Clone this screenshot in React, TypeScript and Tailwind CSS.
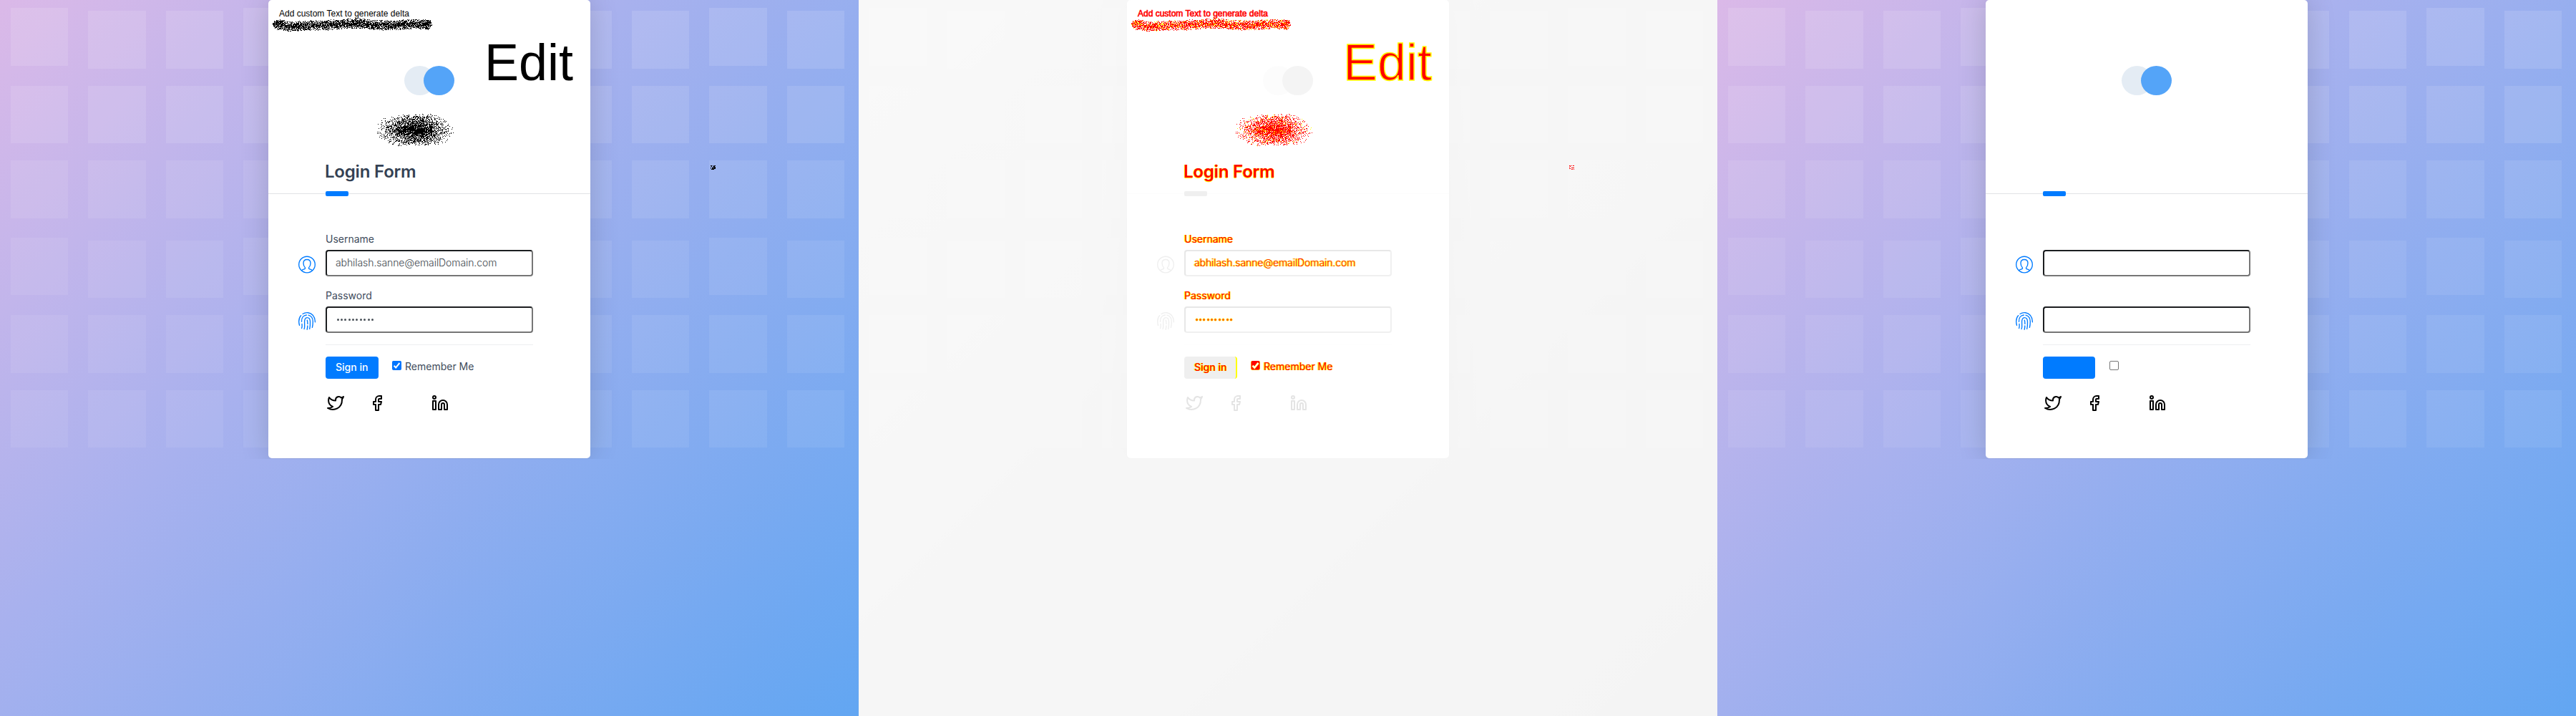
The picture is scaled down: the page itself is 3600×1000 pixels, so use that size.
import type { ReactNode } from "react";

type Mode = "full" | "blank" | "delta";

/* ---------- seeded spray-brush generator ---------- */

function makeRandom(seed: number) {
  let a = seed;
  return () => {
    a = (a + 0x6d2b79f5) | 0;
    let t = Math.imul(a ^ (a >>> 15), 1 | a);
    t = (t + Math.imul(t ^ (t >>> 7), 61 | t)) ^ t;
    return ((t ^ (t >>> 14)) >>> 0) / 4294967296;
  };
}

type Dab = { x: number; y: number; rx: number; ry: number; n: number; pow: number };

function spray(dabs: Dab[], seed: number, accentShare: number) {
  const rand = makeRandom(seed);
  const seen = new Map<string, boolean>();
  for (const d of dabs) {
    for (let i = 0; i < d.n; i++) {
      const a = rand() * Math.PI * 2;
      const r = Math.pow(rand(), d.pow);
      const x = Math.round(d.x + Math.cos(a) * r * d.rx);
      const y = Math.round(d.y + Math.sin(a) * r * d.ry);
      const key = `${x} ${y}`;
      const accent = rand() < accentShare;
      if (!seen.has(key)) seen.set(key, accent);
    }
  }
  let main = "";
  let accent = "";
  seen.forEach((isAccent, key) => {
    const seg = `M${key}h1v1h-1z`;
    if (isAccent) accent += seg;
    else main += seg;
  });
  return { main, accent };
}

const strokeLine: [number, number][] = [
  [11, 34], [20, 34], [28, 37], [45, 36], [60, 35], [80, 35], [100, 33],
  [125, 32], [145, 34], [165, 35], [190, 34], [212, 33], [223, 34],
];

function strokeDabs(): Dab[] {
  const dabs: Dab[] = [];
  for (let x = 14; x <= 223; x += 1.5) {
    let i = 0;
    while (i < strokeLine.length - 2 && strokeLine[i + 1][0] < x) i++;
    const [x0, y0] = strokeLine[i];
    const [x1, y1] = strokeLine[i + 1];
    dabs.push({ x, y: y0 + ((y1 - y0) * (x - x0)) / (x1 - x0), rx: 6, ry: 7, n: 23, pow: 0.7 });
  }
  dabs.push({ x: 13, y: 34, rx: 7, ry: 6.5, n: 160, pow: 0.6 });
  dabs.push({ x: 222, y: 34, rx: 6, ry: 7, n: 110, pow: 0.6 });
  return dabs;
}

const cloudDabs: Dab[] = Array.from({ length: 15 }, (_, i) => ({
  x: 181 + i * 3.4,
  y: 181 + Math.sin(i) * 1.5,
  rx: 31,
  ry: 21,
  n: 200,
  pow: 0.9,
}));

const brush = {
  full: { stroke: spray(strokeDabs(), 7, 0), cloud: spray(cloudDabs, 11, 0) },
  delta: { stroke: spray(strokeDabs(), 7, 0.2), cloud: spray(cloudDabs, 11, 0.13) },
};

function BrushMarks({ mode }: { mode: "full" | "delta" }) {
  const b = brush[mode];
  const main = mode === "full" ? "#000000" : "#ff0000";
  return (
    <svg className="absolute left-0 top-0" width="450" height="220" shapeRendering="crispEdges" aria-hidden>
      <path d={b.stroke.main + b.cloud.main} fill={main} />
      <path d={b.stroke.accent + b.cloud.accent} fill="#ffff00" />
    </svg>
  );
}

function Speck({ mode }: { mode: "full" | "delta" }) {
  return (
    <svg
      className="absolute left-[993px] top-[231px]"
      width="8"
      height="7"
      fill={mode === "full" ? "#000000" : "#ff0000"}
      shapeRendering="crispEdges"
      aria-hidden
    >
      {mode === "full" ? (
        <path d="M0 0h2v1h-2zM3 0h1v1h-1zM5 0h2v1h-2zM1 1h1v1h-1zM4 1h2v1h-2zM0 2h1v1h-1zM3 2h4v1h-4zM2 3h2v1h-2zM5 3h2v1h-2zM0 4h1v1h-1zM2 4h5v1h-5zM1 5h4v1h-4zM6 4h1v1h-1z" />
      ) : (
        <path d="M0 0h2v1h-2zM3 0h1v1h-1zM5 0h2v1h-2zM1 1h1v1h-1zM0 2h1v1h-1zM3 3h4v1h-4zM0 4h2v1h-2zM3 5h2v1h-2zM6 5h1v1h-1z" />
      )}
    </svg>
  );
}

/* ---------- icons ---------- */

function UserIcon() {
  return (
    <svg width="24" height="25" viewBox="0 0 24 24.6" fill="none" stroke="#007bff" strokeWidth="1.35" strokeLinecap="round">
      <circle cx="12" cy="12.3" r="11.3" />
      <path d="M4.7 20.4c.5-.7 1.6-1.2 2.7-1.5 2.2-.6 2.4-1.2 1.9-2.5C7.7 14.7 7 13 7 10.2 7 7 9 5.3 12 5.3s5 1.7 5 4.9c0 2.8-.7 4.5-2.3 6.2-.5 1.3-.3 1.9 1.9 2.5 1.1.3 2.2.8 2.7 1.5" />
    </svg>
  );
}

function FingerprintIcon() {
  return (
    <svg width="24" height="25" viewBox="0 0 24 25" fill="none" stroke="#007bff" strokeWidth="1.35" strokeLinecap="round">
      <path d="M1.5 18.3C.2 13.5.3 8.3 3.6 4.6" />
      <path d="M6 2.5C10.500-.4 16.800.2 20.200 4.200c2.300 2.700 3.100 6 3.200 9.600" />
      <path d="M4.5 13.2C4.300 8 7 4.300 11.300 4" />
      <path d="M14 4.200c4.300 1 6.200 4.700 6.300 8.800 0 3-.2 5.600-.9 8.300" />
      <path d="M5 16.500c.3 2.200.2 4.200-.4 6" />
      <path d="M8.100 23.600c1-2.700.6-5.600.5-8.600-.3-4.600 1-7.400 3.700-7.400 2.900 0 4.100 2.400 4.200 5.600.1 3.700 0 7-.8 10.100" />
      <path d="M12.300 11.200c.6 1.600.6 3.300.6 5.200" />
      <path d="M12.800 19c0 1.800-.2 3.400-.6 5.200" />
    </svg>
  );
}

function SocialIcon({ children }: { children: ReactNode }) {
  return (
    <svg width="24" height="24" viewBox="0 0 24 24" fill="none" stroke="#000000" strokeWidth="2" strokeLinecap="round" strokeLinejoin="round">
      {children}
    </svg>
  );
}

/* ---------- page pieces ---------- */

const tones = {
  full: { heading: "text-[#344153]", label: "text-[#3e4b5b]", value: "text-[#40474e]", button: "text-white", note: "text-black", dot: "bg-[#495057]" },
  blank: { heading: "invisible", label: "invisible", value: "invisible", button: "invisible", note: "invisible", dot: "invisible" },
  delta: {
    heading: "visible text-[#ff0000] [text-shadow:-0.6px_0_#ffff00,0.6px_0_#ffff00,0_0.6px_#ffff00]",
    label: "visible text-[#ff0000] [text-shadow:-1px_0_#ffff00,1px_0_#ffff00]",
    value: "visible text-[#ff0000] [text-shadow:-1px_0_#ffff00,1px_0_#ffff00]",
    button: "visible text-[#ff0000] [text-shadow:-1px_0_#ffff00,1px_0_#ffff00]",
    note: "visible text-[#ff0000] [-webkit-text-stroke:0.6px_#ff0000]",
    dot: "visible bg-[#ff5a00] ring-[0.5px] ring-[#ffff00]",
  },
};

function Field({ label, icon, mode, gap, children }: { label: string; icon: ReactNode; mode: Mode; gap: string; children: ReactNode }) {
  return (
    <div className={`grid grid-cols-[24px_290px] gap-x-[14px] ${gap}`}>
      <div className={`col-start-2 h-5 text-sm leading-5 ${tones[mode].label}`}>{label}</div>
      <div className="mt-[13px]">{icon}</div>
      <div className="mt-[5px] flex h-[37px] items-start rounded-[4px] border-2 border-b-[#767676] border-l-[#1c1e20] border-r-[#767676] border-t-[#1c1e20] bg-white px-3 pt-[6px]">
        {children}
      </div>
    </div>
  );
}

function Checkbox({ mode }: { mode: Mode }) {
  if (mode === "blank") {
    return <span className="size-[13px] rounded-[2px] border border-[#767676] bg-white" />;
  }
  const box = mode === "full" ? "#0075ff" : "#ff0000";
  const edge = mode === "full" ? "#0075ff" : "#ffff00";
  return (
    <svg className="visible" width="13" height="13" viewBox="0 0 13 13" fill="none">
      <rect x="0" y="0" width="13" height="13" rx="2" fill={edge} />
      <rect x="0.5" y="0" width="12" height="12.5" rx="2" fill={box} />
      {mode === "delta" && <path d="M2.5 6.8 5.2 9.6 10.6 3" stroke="#ffff00" strokeWidth="3" />}
      <path d="M2.6 6.8 5.2 9.4 10.4 3" stroke="#ffffff" strokeWidth="2" />
    </svg>
  );
}

const columns = [0, 1, 2, 3, 4, 5, 6, 7, 8, 9];
const rows = [
  "bg-white/12",
  "mt-[28px] bg-white/11",
  "mt-[24px] bg-white/9",
  "mt-[27px] bg-white/8",
  "mt-[28px] bg-white/7",
  "mt-[24px] bg-white/7",
];

function Tiles() {
  return (
    <div className="absolute left-[15px] top-[11px] flex w-[1200px] gap-[28px]">
      {[...columns, 10].map((c) => (
        <div key={c} className="flex w-[80.48px] shrink-0 flex-col">
          {rows.map((row, r) => (
            <div
              key={r}
              className={`h-[80.5px] shrink-0 ${row} ${c % 3 !== 0 && (r === 0 || r === 3) ? "translate-y-1" : ""}`}
            />
          ))}
        </div>
      ))}
    </div>
  );
}

function Page({ mode }: { mode: Mode }) {
  const t = tones[mode];
  const overlay = mode === "delta";
  return (
    <div
      className={`relative h-[1000px] w-[1200px] overflow-hidden font-['Inter',sans-serif] ${
        overlay ? "invisible" : "bg-[linear-gradient(135deg,#dbb9e8_0%,#a8b1ee_40%,#62a6f2_100%)]"
      }`}
    >
      <Tiles />
      <div className="relative h-[641px] overflow-hidden">
        <div className="relative mx-auto h-[640px] w-[450px] rounded-[5px] bg-white shadow-[0_0_40px_rgba(0,0,0,0.16)]">
          <div className="h-[270px] pt-[92px]">
            <div className="flex pl-[190px]">
              <span className="h-[41px] w-[43px] rounded-[50%] bg-[#e4ecf4]" />
              <span className="-ml-4 h-[41px] w-[43px] rounded-[50%] bg-[#54a4f8]" />
            </div>
            <h1 className={`mt-[91px] pl-[79px] text-2xl leading-8 font-semibold tracking-[-0.2px] ${t.heading}`}>Login Form</h1>
          </div>
          <div className="relative h-px bg-[#e1e3e6]">
            <span className="absolute -top-[3px] left-20 h-[7px] w-8 rounded-[2px] bg-[#007bff]" />
          </div>

          <form className="pl-[42px]">
            <Field label="Username" icon={<UserIcon />} mode={mode} gap="mt-[53px]">
              <span className={`text-sm leading-5 font-light tracking-[-0.08px] ${t.value}`}>abhilash.sanne@emailDomain.com</span>
            </Field>
            <Field label="Password" icon={<FingerprintIcon />} mode={mode} gap="mt-[17px]">
              <span className="flex gap-[2.4px] pl-[1.5px] pt-[9px]">
                {columns.map((i) => (
                  <span key={i} className={`size-[3px] rounded-full ${t.dot}`} />
                ))}
              </span>
            </Field>

            <div className="ml-[38px] w-[290px]">
              <div className="mt-4 h-px bg-[#eeeff0]" />
              <div className="mt-4 flex items-start">
                <div
                  className={`h-[30.5px] rounded-[4px] bg-[#007bff] pl-[14px] pt-[5px] text-sm leading-5 font-medium ${
                    mode === "full" ? "w-[73.5px]" : "w-[72.5px]"
                  }`}
                >
                  <span className={t.button}>Sign in</span>
                </div>
                {overlay && <span className="visible -ml-1 h-[30.5px] w-[5px] rounded-r-[4px] border-r-2 border-[#ffff00]" />}
                <div className="ml-auto flex w-[197px] items-start pt-[6px]">
                  <Checkbox mode={mode} />
                  <span className={`-mt-[2px] ml-[5px] text-sm leading-5 ${t.label}`}>Remember Me</span>
                </div>
              </div>
              <div className="mt-[22px] flex pl-[2px]">
                <SocialIcon>
                  <path d="M23 3a10.9 10.9 0 0 1-3.14 1.53 4.48 4.48 0 0 0-7.86 3v1A10.66 10.66 0 0 1 3 4s-4 9 5 13a11.64 11.64 0 0 1-7 2c9 5 20 0 20-11.5a4.5 4.5 0 0 0-.08-.83A7.72 7.72 0 0 0 23 3z" />
                </SocialIcon>
                <span className="ml-[34px] flex">
                  <SocialIcon>
                    <path d="M18 2h-3a5 5 0 0 0-5 5v3H7v4h3v8h4v-8h3l1-4h-4V7a1 1 0 0 1 1-1h3z" />
                  </SocialIcon>
                </span>
                <span className="ml-16 flex">
                  <SocialIcon>
                    <path d="M16 8a6 6 0 0 1 6 6v7h-4v-7a2 2 0 0 0-2-2 2 2 0 0 0-2 2v7h-4v-7a6 6 0 0 1 6-6z" />
                    <rect x="2" y="9" width="4" height="12" />
                    <circle cx="4" cy="4" r="2" />
                  </SocialIcon>
                </span>
              </div>
            </div>
          </form>

          {mode !== "blank" && (
            <div className="visible absolute inset-0 font-['Liberation_Sans',sans-serif]">
              <p className={`absolute left-[15px] top-[11px] text-xs leading-4 whitespace-nowrap ${t.note}`}>
                Add custom Text to generate delta
              </p>
              <p
                className={`absolute left-[302px] top-[51px] text-7xl leading-[72px] ${
                  overlay ? "text-[#ff0000] [-webkit-text-stroke:1.5px_#ffff00]" : "text-black"
                }`}
              >
                Edit
              </p>
              <BrushMarks mode={mode} />
            </div>
          )}
        </div>
      </div>
      {mode !== "blank" && (
        <div className="visible">
          <Speck mode={mode} />
        </div>
      )}
    </div>
  );
}

export default function App() {
  return (
    <main className="grid h-[1000px] w-[3600px] grid-cols-3 overflow-hidden bg-white">
      <Page mode="full" />
      <div className="relative">
        <div className="opacity-10 grayscale">
          <Page mode="blank" />
        </div>
        <div className="absolute inset-0">
          <Page mode="delta" />
        </div>
      </div>
      <Page mode="blank" />
    </main>
  );
}
